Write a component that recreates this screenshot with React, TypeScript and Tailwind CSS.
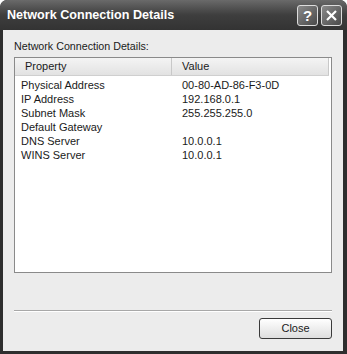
import React from "react";

const rows: [string, string][] = [
  ["Physical Address", "00-80-AD-86-F3-0D"],
  ["IP Address", "192.168.0.1"],
  ["Subnet Mask", "255.255.255.0"],
  ["Default Gateway", ""],
  ["DNS Server", "10.0.0.1"],
  ["WINS Server", "10.0.0.1"],
];

export default function App() {
  return (
    <div className="w-[347px] h-[354px] bg-[#2e2e2e] flex flex-col overflow-hidden rounded-t-[7px]" style={{ fontFamily: '"Liberation Sans", Arial, sans-serif' }}>
      {/* Title bar */}
      <div className="h-[30px] shrink-0 flex items-center pl-[7px] pr-[5px] bg-gradient-to-b from-[#6a6a6a] via-[#3e3e3e] to-[#333333] rounded-t-[7px]">
        <div className="flex-1 text-white font-bold text-[12.6px]">Network Connection Details</div>
        <div className="flex gap-[3px]">
          <div className="w-[21px] h-[21px] rounded-[3px] border border-[#dcdcdc] bg-gradient-to-br from-[#8a8a8a] to-[#4a4a4a] flex items-center justify-center text-white font-bold text-[15px] leading-none">?</div>
          <div className="w-[21px] h-[21px] rounded-[3px] border border-[#dcdcdc] bg-gradient-to-br from-[#8a8a8a] to-[#4a4a4a] flex items-center justify-center">
            <svg width="13" height="13" viewBox="0 0 13 13">
              <path d="M2 2 L11 11 M11 2 L2 11" stroke="white" strokeWidth="2.2" />
            </svg>
          </div>
        </div>
      </div>
      {/* Body */}
      <div className="flex-1 mx-[3px] mr-[4px] mb-[3px] bg-[#ececec] flex flex-col px-[11px]">
        <div className="text-[10.7px] text-[#1a1a1a] mt-[10px] leading-[13px]">Network Connection Details:</div>
        <div className="mt-[4px] h-[216px] border border-[#8a8a8a] bg-white flex flex-col">
          <div className="h-[18px] flex text-[11px] text-[#1a1a1a] bg-gradient-to-b from-[#f4f4f4] to-[#e2e2e2] border-b border-[#cfcfcf] mr-[2px]">
            <div className="w-[157px] pl-[10px] flex items-center border-r border-[#c8c8c8]">Property</div>
            <div className="flex-1 pl-[10px] flex items-center border-r border-[#c8c8c8]">Value</div>
          </div>
          <div className="flex flex-col pt-[2px]">
            {rows.map(([k, v]) => (
              <div key={k} className="flex h-[14px] items-center text-[11px] text-[#1a1a1a]">
                <div className="w-[157px] pl-[6px]">{k}</div>
                <div className="flex-1 pl-[10px]">{v}</div>
              </div>
            ))}
          </div>
        </div>
        <div className="mt-[37px] h-[2px] border-t border-[#a8a8a8] border-b border-b-white" />
        <div className="flex justify-end mt-[6px]">
          <div className="w-[73px] h-[21px] rounded-[3px] border border-[#3a3a3a] bg-gradient-to-b from-[#ffffff] to-[#dedede] flex items-center justify-center text-[11px] text-[#1a1a1a]">Close</div>
        </div>
      </div>
    </div>
  );
}
